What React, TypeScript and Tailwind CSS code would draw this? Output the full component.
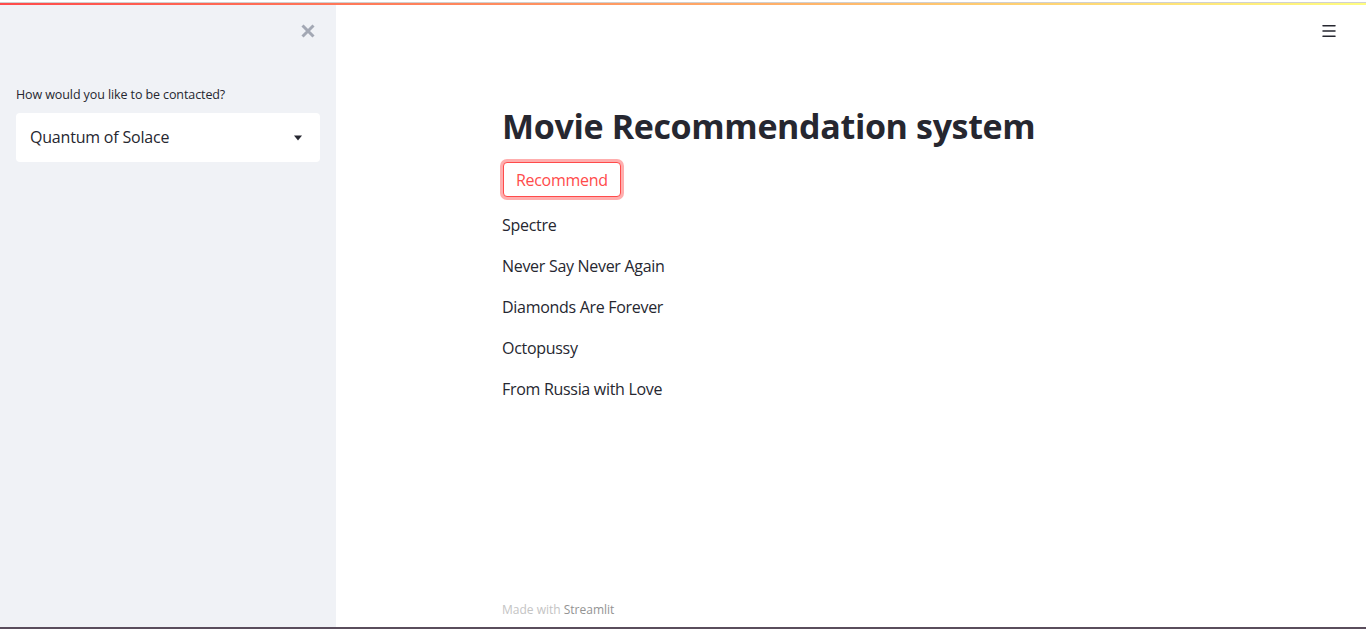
import { Menu } from 'lucide-react';

export default function App() {
  const movies = [
    "Spectre",
    "Never Say Never Again",
    "Diamonds Are Forever",
    "Octopussy",
    "From Russia with Love",
  ];

  return (
    <div className="h-[629px] w-[1366px] flex flex-col bg-white text-[#262730] font-['Open_Sans',sans-serif] overflow-hidden">
      <div className="h-[2px] bg-white"></div>
      <div className="h-[1px] bg-[#d0d0d0]"></div>
      <div className="h-[2px] bg-[linear-gradient(90deg,#ff4b4b,#fffd80)]"></div>

      <div className="flex flex-1 min-h-0">
        {/* sidebar */}
        <aside className="w-[336px] bg-[#f0f2f6] px-4 flex flex-col">
          <div className="flex justify-end pt-[18px] pr-[4px]">
            <svg width="16" height="16" viewBox="0 0 16 16" className="text-[#a3a8b4]">
              <path d="M2.5 2.5 L13.5 13.5 M13.5 2.5 L2.5 13.5" stroke="currentColor" strokeWidth="3" strokeLinecap="butt" />
            </svg>
          </div>
          <label className="mt-[46px] text-[12.5px] leading-[20px] tracking-[-0.1px] text-[#262730]">How would you like to be contacted?</label>
          <div className="mt-[8px] h-[49px] bg-white rounded-[4px] flex items-center justify-between pl-[14px] pr-[17px]">
            <span className="text-[16px] tracking-[-0.2px] -mt-[1px]">Quantum of Solace</span>
            <svg width="10" height="6" viewBox="0 0 10 6">
              <path d="M1 0.5 H9 L5 5.5 Z" fill="#262730" />
            </svg>
          </div>
        </aside>

        {/* main */}
        <main className="flex-1 relative flex flex-col items-center">
          <button className="absolute top-[17px] right-[28px] text-[#262730]">
            <Menu size={18} strokeWidth={2} />
          </button>
          <div className="w-[730px] px-4 pt-[99px] flex-1 flex flex-col">
            <h1 className="text-[34px] font-bold leading-[44px] tracking-[-0.35px]">Movie Recommendation system</h1>
            <div className="mt-[14px]">
              <button className="h-[35px] px-[12px] rounded-[4px] border border-[#ff4b4b] bg-white text-[#ff4b4b] text-[16px] tracking-[-0.3px] ring-[3px] ring-[#ff4b4b]/45 ml-[1px]">
                Recommend
              </button>
            </div>
            <div className="mt-[16px] flex flex-col gap-[17px]">
              {movies.map((m) => (
                <p key={m} className="text-[16px] leading-[24px] tracking-[-0.3px]">{m}</p>
              ))}
            </div>
            <div className="mt-auto pb-[8px] text-[12px] text-[#c4c4c4]">
              Made with <span className="text-[#939393]">Streamlit</span>
            </div>
          </div>
        </main>
      </div>
      <div className="h-[2px] bg-[#5a4d5c]"></div>
    </div>
  );
}
